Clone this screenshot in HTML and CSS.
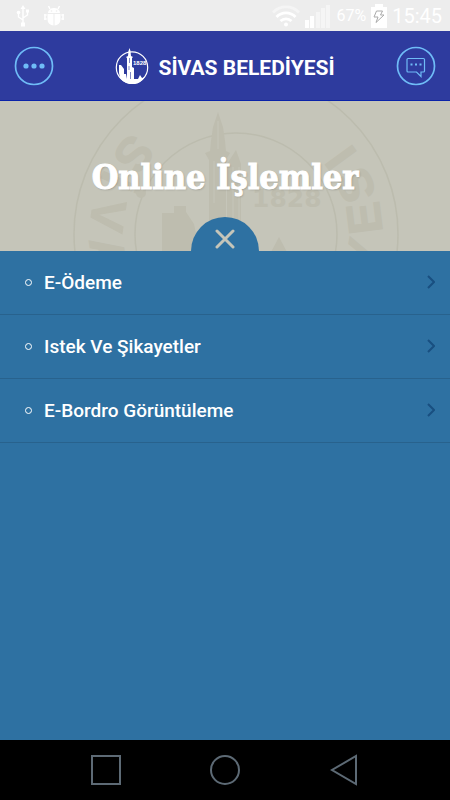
FILE: index.html
```html
<!DOCTYPE html>
<html lang="tr">
<head>
    <meta charset="UTF-8">
    <meta name="viewport" content="width=device-width, initial-scale=1.0">
    <title>Sivas Belediyesi</title>
    <link rel="stylesheet" href="styles.css">
</head>
<body>
    <!-- Status bar -->
    <div class="status-bar">
        <svg class="usb-icon" width="14" height="22" viewBox="0 0 14 22" fill="none" stroke="#fff" stroke-width="1.4">
            <path d="M7 3v15M7 15L2.500 12V8M7 13l4.500-3V7"/>
            <path d="M7 0l2.500 4h-5zM5 17.500h4v4H5zM10 4.500h3v3h-3z" fill="#fff" stroke="none"/>
            <circle cx="2.500" cy="7.500" r="1.800" fill="#fff" stroke="none"/>
        </svg>
        <svg class="debug-icon" width="20" height="20" viewBox="0 0 20 20">
            <path d="M4 7a6 5 0 0 1 12 0zM3.500 8h6v11.500a6 6 0 0 1-6-6zM10.500 8h6v5.500a6 6 0 0 1-6 6z" fill="#fff"/>
            <path d="M6 3L4.500 0M14 3l1.500-3M1 8v6M19 8v6" stroke="#fff" stroke-width="1.500"/>
            <path d="M0 9h3M0 13h3M17 9h3M17 13h3" stroke="#fff" stroke-width="1.200"/>
            <circle cx="7.500" cy="5" r="0.800" fill="#ededed"/>
            <circle cx="12.500" cy="5" r="0.800" fill="#ededed"/>
        </svg>
        <div class="status-right">
            <svg width="28" height="22" viewBox="0 0 28 22" fill="none" stroke="#fff" stroke-width="2.800">
                <path d="M1 7.500a18 18 0 0 1 26 0" stroke="#f5f5f5"/>
                <path d="M4.500 12a13 13 0 0 1 19 0M8.500 16a8 8 0 0 1 11 0"/>
                <circle cx="14" cy="19.500" r="2" fill="#fff" stroke="none"/>
            </svg>
            <svg width="26" height="24" viewBox="0 0 26 24">
                <path d="M0 16h4v8H0zM5 12h4v12H5z" fill="#fff"/>
                <path d="M11 8h4v16h-4zM16 4h4v20h-4zM21 1h4v23h-4z" fill="#f5f5f5"/>
            </svg>
            <span class="percent">67%</span>
            <svg width="16" height="24" viewBox="0 0 16 24">
                <path d="M4 0h8v3h4v21H0V3h4z" fill="#fff"/>
                <path d="M5.500 7h6l-2 4h3.500l-8 7.500 2-5.500H3z" fill="none" stroke="#aaa"/>
            </svg>
            <span class="clock">15:45</span>
        </div>
    </div>

    <!-- Header -->
    <header class="header">
        <button class="round-button" aria-label="Menü">
            <svg width="40" height="40" viewBox="0 0 40 40">
                <circle cx="20" cy="20" r="18.500" fill="none" stroke="#6fbcf7" stroke-width="1.700"/>
                <g fill="#6fbcf7">
                    <circle cx="12" cy="20" r="2.600"/>
                    <circle cx="20" cy="20" r="2.600"/>
                    <circle cx="28" cy="20" r="2.600"/>
                </g>
            </svg>
        </button>
        <div class="brand">
            <svg width="34" height="36" viewBox="0 0 34 36">
                <circle cx="17" cy="19.500" r="15.700" fill="none" stroke="#fff" stroke-width="1.200"/>
                <path d="M12 31V10l-1-1 2-1 .5-5 1-3 1 3 .5 5 2 1-1 1v9l2 1v11h4l2-4 2 3 3-1a15 15 0 0 1-25 1l-1-5V17h2l3 4v5h2z" fill="#fff"/>
                <path d="M14.500 10v5M14 18v4M15.500 24v7" stroke="#2e3b9e" stroke-width="0.600"/>
                <text class="logo-year" x="18" y="17">1828</text>
            </svg>
            <span class="brand-name">SİVAS BELEDİYESİ</span>
        </div>
        <button class="round-button" aria-label="Mesajlar">
            <svg width="40" height="40" viewBox="0 0 40 40" fill="none" stroke="#6fbcf7">
                <circle cx="20" cy="20" r="18.500" stroke-width="1.700"/>
                <path d="M12 12.500h15.500a1 1 0 0 1 1 1v11.500a1 1 0 0 1-1 1H25v4.500l-4.500-4.500H12a1 1 0 0 1-1-1V13.500a1 1 0 0 1 1-1z" stroke-width="1.200"/>
                <path d="M14.500 18.500h2M19 18.500h2M23.500 18.500h2" stroke-width="2"/>
            </svg>
        </button>
    </header>

    <!-- Banner with the city seal behind the title -->
    <section class="banner">
        <svg class="seal" width="450" height="150" viewBox="0 0 450 150" aria-hidden="true">
            <g fill="none" stroke="#bcbcae" stroke-width="1.500">
                <circle cx="236" cy="133" r="162"/>
                <circle cx="236" cy="133" r="101"/>
            </g>
            <g fill="#bebdaf">
                <path d="M218 11l5 15 2 14 1 10 4 2-4 7v91h-17V59l-4-7 5-2 1-10 2-14zM236 49l5 14v88h-14V63zM174 105h12v6l8 12 5 24v4h-37v-39h12zM279 136l8 15h-16z"/>
                <circle cx="141" cy="92" r="5"/>
            </g>
            <path d="M218 20v28M214 60v42M221 58v30M233 66v54M239 66v54" stroke="#c5c5b9"/>
            <text class="seal-year" x="252" y="106">1828</text>
            <g class="seal-letters">
                <text x="236" y="279" transform="rotate(128 236 133)">S</text>
                <text x="236" y="279" transform="rotate(114 236 133)">İ</text>
                <text x="236" y="279" transform="rotate(98 236 133)">V</text>
                <text x="236" y="279" transform="rotate(81 236 133)">A</text>
                <text x="236" y="279" transform="rotate(-81 236 133)">Y</text>
                <text x="236" y="279" transform="rotate(-97 236 133)">E</text>
                <text x="236" y="279" transform="rotate(-112 236 133)">S</text>
                <text x="236" y="279" transform="rotate(-126 236 133)">I</text>
            </g>
        </svg>
        <h1>Online İşlemler</h1>
        <button class="close-button" aria-label="Kapat">
            <svg width="20" height="20" viewBox="0 0 20 20">
                <path d="M2 2l16 16M18 2L2 18" stroke="#c5c5b9" stroke-width="3" stroke-linecap="round"/>
            </svg>
        </button>
    </section>

    <!-- Menu -->
    <nav class="menu">
        <a class="menu-item" href="#">
            <span class="bullet"></span>
            <span class="label">E-Ödeme</span>
            <svg width="8" height="14" viewBox="0 0 8 14"><path d="M1 1l6 6-6 6"/></svg>
        </a>
        <a class="menu-item" href="#">
            <span class="bullet"></span>
            <span class="label">Istek Ve Şikayetler</span>
            <svg width="8" height="14" viewBox="0 0 8 14"><path d="M1 1l6 6-6 6"/></svg>
        </a>
        <a class="menu-item" href="#">
            <span class="bullet"></span>
            <span class="label">E-Bordro Görüntüleme</span>
            <svg width="8" height="14" viewBox="0 0 8 14"><path d="M1 1l6 6-6 6"/></svg>
        </a>
    </nav>

    <!-- Navigation keys -->
    <div class="nav-bar">
        <button aria-label="Son uygulamalar">
            <svg width="32" height="32" viewBox="0 0 32 32"><path d="M2 2h28v28H2z"/></svg>
        </button>
        <button aria-label="Ana ekran">
            <svg width="32" height="32" viewBox="0 0 32 32"><circle cx="16" cy="16" r="14"/></svg>
        </button>
        <button aria-label="Geri">
            <svg width="32" height="32" viewBox="0 0 32 32"><path d="M28 2v28L4 16z"/></svg>
        </button>
    </div>
</body>
</html>
```
FILE: styles.css
```css
* {
    box-sizing: border-box;
}
body {
    margin: 0;
    min-height: 100vh;
    display: flex;
    flex-direction: column;
    font-family: Roboto, "Liberation Sans", sans-serif;
    background-color: #2e71a2;
}
svg {
    display: block;
}
button {
    padding: 0;
    border: none;
    background: none;
    cursor: pointer;
}

/* Status bar */
.status-bar {
    height: 31px;
    padding: 0 8px 0 16px;
    display: flex;
    align-items: center;
    background-color: #ededed;
    color: #fff;
}
.debug-icon {
    margin-left: 14px;
}
.status-right {
    margin-left: auto;
    display: flex;
    align-items: center;
    gap: 5px;
}
.percent {
    font-size: 16px;
}
.clock {
    font-size: 20px;
}

/* Header */
.header {
    height: 70px;
    padding: 0 14px;
    display: flex;
    align-items: center;
    justify-content: space-between;
    background-color: #2e3b9e;
    border-bottom: 1px solid #0a22a8;
}
.brand {
    display: flex;
    align-items: center;
    gap: 9px;
    color: #fff;
}
.brand-name {
    padding-top: 4px;
    font-size: 21px;
    line-height: 26px;
    font-weight: 700;
}
.logo-year {
    font-family: "Liberation Sans", sans-serif;
    font-size: 6px;
    font-weight: 700;
    fill: #fff;
}

/* Banner */
.banner {
    position: relative;
    height: 150px;
    display: flex;
    justify-content: center;
    overflow: hidden;
    background-color: #c5c5b9;
}
.seal {
    position: absolute;
    top: 0;
    left: 50%;
    transform: translateX(-50%);
}
.seal-year {
    font-family: "DejaVu Sans", sans-serif;
    font-size: 25px;
    font-weight: 700;
    fill: #bebdaf;
}
.seal-letters {
    font-family: "Liberation Sans", sans-serif;
    font-size: 48px;
    font-weight: 700;
    text-anchor: middle;
    fill: #bebdaf;
    stroke: #bebdaf;
    stroke-width: 1px;
}
h1 {
    position: relative;
    margin: 0;
    padding-top: 52px;
    font-family: "DejaVu Serif Condensed", "DejaVu Serif", serif;
    font-size: 34px;
    line-height: 48px;
    font-weight: 700;
    color: #fff;
    -webkit-text-stroke: 1px #fff;
    text-shadow: 1px 1px 2px rgba(0, 0, 0, 0.2);
}
.close-button {
    position: absolute;
    bottom: 0;
    left: 50%;
    transform: translateX(-50%);
    width: 68px;
    height: 34px;
    padding-top: 10px;
    display: flex;
    align-items: center;
    justify-content: center;
    border-radius: 34px 34px 0 0;
    background-color: #2e71a2;
}

/* Menu */
.menu {
    flex: 1;
}
.menu-item {
    height: 64px;
    padding: 0 15px 1px 25px;
    display: flex;
    align-items: center;
    border-bottom: 1px solid #28628d;
    color: #fff;
    text-decoration: none;
}
.bullet {
    width: 7px;
    height: 7px;
    border: 1px solid #fff;
    border-radius: 50%;
}
.label {
    flex: 1;
    margin-left: 12px;
    font-size: 19px;
    font-weight: 500;
}
.menu-item svg {
    fill: none;
    stroke: #194f80;
    stroke-width: 2;
}

/* Navigation keys */
.nav-bar {
    height: 60px;
    padding: 0 90px;
    display: flex;
    align-items: center;
    justify-content: space-between;
    background-color: #000;
}
.nav-bar svg {
    fill: none;
    stroke: #5d6a75;
    stroke-width: 2;
}
```
